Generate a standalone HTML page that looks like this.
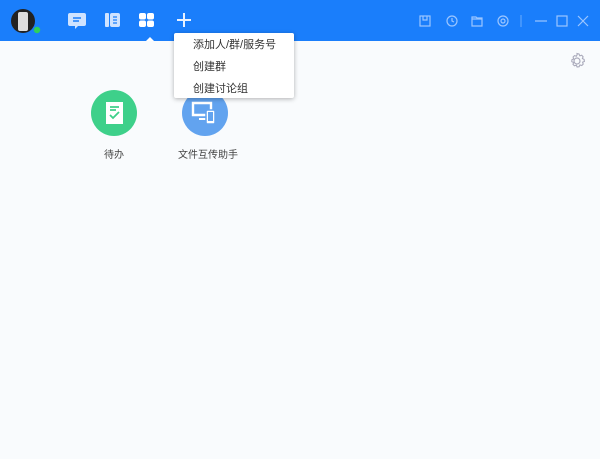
<!DOCTYPE html>
<html><head><meta charset="utf-8"><style>
body{margin:0;width:600px;height:459px;background:#f9fbfd;font-family:"Liberation Sans","Noto Sans CJK SC",sans-serif;position:relative;overflow:hidden}
.hd{position:absolute;left:0;top:0;width:600px;height:41px;background:#1a7efb}
svg{position:absolute}
.menu{position:absolute;left:174px;top:33px;width:120px;height:65px;background:#fff;box-shadow:0 1px 5px rgba(0,0,0,.3);border-radius:2px;font-size:11px;color:#333}
.menu div{position:absolute;left:19px}
.c{position:absolute;width:46px;height:46px;border-radius:50%}
.lb{position:absolute;font-size:10px;color:#444;top:146px}
</style></head><body>
<div class="hd"></div>
<svg width="600" height="41" style="left:0;top:0">
<circle cx="23" cy="21" r="12" fill="#222"/>
<rect x="18" y="12" width="10" height="19" rx="2" fill="#ddd"/>
<circle cx="37" cy="30" r="4" fill="#2fd05a" stroke="#1a7efb" stroke-width="1.5"/>
<g fill="#cfe3ff">
<path d="M70 13h14a2 2 0 0 1 2 2v9a2 2 0 0 1-2 2h-6l-3 3v-3h-5a2 2 0 0 1-2-2v-9a2 2 0 0 1 2-2z"/>
<rect x="105" y="13" width="4" height="14" rx="1"/><rect x="110" y="13" width="10" height="14" rx="2"/>
<rect x="139" y="13" width="7" height="6.5" rx="2" fill="#fff"/><rect x="147" y="13" width="7" height="6.5" rx="2" fill="#fff"/>
<rect x="139" y="20.5" width="7" height="6.5" rx="2" fill="#fff"/><rect x="147" y="20.5" width="7" height="6.5" rx="2" fill="#fff"/>
</g>
<path d="M73 18h8M73 21h6" stroke="#1a7efb" stroke-width="1.5"/>
<path d="M113 17h4M113 20h4M113 23h4" stroke="#1a7efb" stroke-width="1.3"/>
<path d="M146 41l4-4 4 4z" fill="#fff"/>
<path d="M184 13v14M177 20h14" stroke="#e8f1ff" stroke-width="2"/>
<g fill="none" stroke="#9cc6ff" stroke-width="1.2">
<rect x="420" y="16" width="10" height="10"/><path d="M423 16v4h4v-4"/>
<circle cx="452" cy="21" r="5"/><path d="M452 18v3l2 1"/>
<path d="M472 17h4l1 1h5v8h-10z M472 19h10"/>
<circle cx="503" cy="21" r="5"/><circle cx="503" cy="21" r="2"/>
<path d="M521 15v12" stroke="#5ea5fc"/>
<path d="M535 21h12"/><rect x="557" y="16" width="10" height="10"/><path d="M578 16l10 10M588 16l-10 10"/>
</g>
</svg>
<svg width="20" height="20" style="left:567px;top:51px"><circle cx="10" cy="10" r="3" fill="none" stroke="#aab" stroke-width="1.2"/><path d="M10 2.5l2 .5.8 1.8 1.9-.6 1.4 1.5-.7 1.9 1.7.8.3 2-1.8.8.6 1.9-1.4 1.4-1.9-.6-.8 1.8-2 .3-.8-1.8-1.9.6-1.4-1.4.6-1.9-1.8-.8.1-2 1.8-.8-.6-1.9 1.4-1.4 1.9.6.8-1.8z" fill="none" stroke="#aab" stroke-width="1.1"/></svg>
<div class="c" style="left:91px;top:90px;background:#3ed08a"></div>
<svg width="24" height="26" style="left:103px;top:100px"><path d="M3 2h17v22H3z" fill="#fff"/><path d="M7 7h9M7 10h6M7 15l3 3 6-6" stroke="#3ed08a" stroke-width="1.8" fill="none"/></svg>
<div class="c" style="left:182px;top:90px;background:#62a3ef"></div>
<svg width="28" height="24" style="left:191px;top:101px"><path d="M2 2h18v12H2z" fill="none" stroke="#fff" stroke-width="2.4"/><path d="M8 18h8" stroke="#fff" stroke-width="2"/><rect x="15" y="9" width="9" height="14" rx="1.5" fill="#fff" stroke="#62a3ef" stroke-width="1.5"/><rect x="17" y="11" width="5" height="9" fill="#62a3ef"/></svg>
<div class="lb" style="left:104px">待办</div>
<div class="lb" style="left:178px">文件互传助手</div>
<div class="menu"><div style="top:3px">添加人/群/服务号</div><div style="top:25px">创建群</div><div style="top:47px">创建讨论组</div></div>
</body></html>
